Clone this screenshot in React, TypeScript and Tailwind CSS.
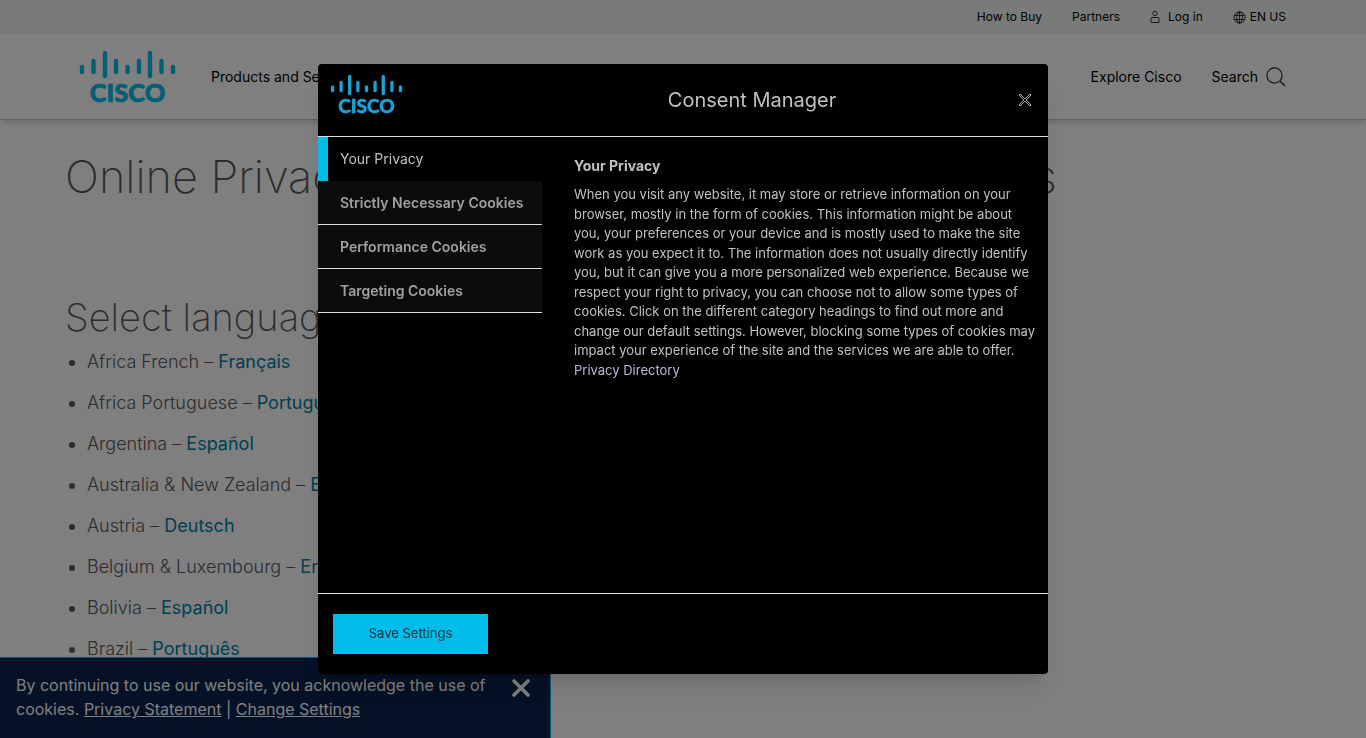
import { useState } from 'react';

interface LanguageEntry {
  region: string;
  language: string;
}

const languages: LanguageEntry[] = [
  { region: 'Africa French', language: 'Français' },
  { region: 'Africa Portuguese', language: 'Português' },
  { region: 'Argentina', language: 'Español' },
  { region: 'Australia & New Zealand', language: 'English' },
  { region: 'Austria', language: 'Deutsch' },
  { region: 'Belgium & Luxembourg', language: 'English' },
  { region: 'Bolivia', language: 'Español' },
  { region: 'Brazil', language: 'Português' },
];

const categories = [
  'Your Privacy',
  'Strictly Necessary Cookies',
  'Performance Cookies',
  'Targeting Cookies',
];

// x position, top and bottom of each bar in the bridge mark
const bars = [
  [2, 14, 22],
  [13.5, 8, 22],
  [25, 0, 26],
  [36, 8, 22],
  [47.5, 14, 22],
  [59, 8, 22],
  [70, 0, 26],
  [81.5, 8, 22],
  [93, 14, 22],
];

function CiscoLogo({ className }: { className: string }) {
  return (
    <svg viewBox="0 0 95 52" className={className} role="img" aria-label="Cisco">
      {bars.map(([x, top, bottom]) => (
        <line
          key={x}
          x1={x}
          x2={x}
          y1={top + 2}
          y2={bottom - 1}
          stroke="currentColor"
          strokeWidth="4.4"
          strokeLinecap="round"
        />
      ))}
      <text
        x="47.5"
        y="51"
        textAnchor="middle"
        fill="currentColor"
        stroke="currentColor"
        strokeWidth="0.7"
        fontFamily="Lato, sans-serif"
        fontWeight="900"
        fontSize="25.5"
      >
        CISCO
      </text>
    </svg>
  );
}

function UserIcon() {
  return (
    <svg
      viewBox="0 0 10 14"
      className="h-3.5 w-2.5"
      fill="none"
      stroke="currentColor"
      strokeWidth="0.8"
    >
      <circle cx="5" cy="3.4" r="2.2" />
      <path d="M1 12.5V8.5Q1 7.5 2 7.5H8Q9 7.5 9 8.5V12.5Z" />
    </svg>
  );
}

function GlobeIcon() {
  return (
    <svg
      viewBox="0 0 13 13"
      className="size-[13px]"
      fill="none"
      stroke="currentColor"
      strokeWidth="0.8"
    >
      <circle cx="6.5" cy="6.5" r="5.6" />
      <ellipse cx="6.5" cy="6.5" rx="2.8" ry="5.6" />
      <path d="M6.5 .9V12.1M1.4 4.5H11.6M1.4 8.5H11.6" />
    </svg>
  );
}

function SearchIcon() {
  return (
    <svg viewBox="0 0 20 20" className="size-5 text-[#333]" fill="none" stroke="currentColor">
      <circle cx="8.5" cy="8.5" r="7.6" strokeWidth="1.2" />
      <path d="M14 14L19 19" strokeWidth="1.6" />
    </svg>
  );
}

function SiteHeader() {
  return (
    <header className="border-b border-[#c4c4c4] text-black shadow-md">
      <div className="flex h-[34px] items-center justify-end gap-[30px] bg-[#f2f7f6] pr-20 text-xs">
        <a href="#buy">How to Buy</a>
        <a href="#partners">Partners</a>
        <a href="#login" className="flex items-center gap-2">
          <UserIcon />
          Log in
        </a>
        <a href="#locale" className="flex items-center gap-1">
          <GlobeIcon />
          EN US
        </a>
      </div>
      <div className="flex h-[85px] items-center px-20 text-sm">
        <a href="#home" className="mr-9 text-[#00bceb]">
          <CiscoLogo className="w-[95px] overflow-visible" />
        </a>
        <a href="#products">Products and Services</a>
        <a href="#explore" className="mr-[30px] ml-auto">
          Explore Cisco
        </a>
        <button className="flex items-center gap-2">
          Search
          <SearchIcon />
        </button>
      </div>
    </header>
  );
}

function CookieBanner() {
  return (
    <div className="fixed bottom-0 left-0 flex w-[551px] items-start justify-between border-t border-r border-[#00bceb] bg-[#08224c] pt-[15px] pr-5 pb-[17px] pl-4 text-base leading-6 text-white">
      <p className="w-[480px]">
        By continuing to use our website, you acknowledge the use of cookies.{' '}
        <a href="#statement" className="underline">
          Privacy Statement
        </a>{' '}
        |{' '}
        <a href="#settings" className="underline">
          Change Settings
        </a>
      </p>
      <button aria-label="Close banner" className="pt-1.5">
        <svg
          viewBox="0 0 18 18"
          className="size-[18px]"
          stroke="currentColor"
          strokeWidth="3.6"
          strokeLinecap="round"
        >
          <path d="M2 2L16 16M16 2L2 16" />
        </svg>
      </button>
    </div>
  );
}

function ConsentDialog() {
  const [active, setActive] = useState(categories[0]);

  return (
    <div className="fixed inset-0 flex items-center justify-center bg-black/50">
      <div
        role="dialog"
        aria-label="Consent Manager"
        className="flex h-[610px] w-[730px] flex-col rounded-sm bg-black text-[#c0c0c0] shadow-xl"
      >
        <div className="flex h-[73px] items-center border-b border-[#e0e0e0] pr-4 pl-[13px]">
          <CiscoLogo className="mb-3 w-[71px] overflow-visible text-[#1ba0d7]" />
          <h2 className="flex-1 pl-[84px] text-center text-xl">Consent Manager</h2>
          <button aria-label="Close">
            <svg
              viewBox="0 0 14 14"
              className="size-3.5"
              fill="none"
              stroke="currentColor"
              strokeWidth="0.9"
            >
              <path d="M1 2L2 1L7 5.8L12 1L13 2L8.2 7L13 12L12 13L7 8.2L2 13L1 12L5.8 7Z" />
            </svg>
          </button>
        </div>

        <div className="flex flex-1">
          <nav className="w-56 text-sm">
            {categories.map((name) => (
              <button
                key={name}
                onClick={() => setActive(name)}
                className={
                  name === active
                    ? 'flex h-11 w-full items-center border-l-10 border-[#00bceb] pl-3'
                    : 'flex h-11 w-full items-center border-b border-[#e0e0e0] bg-[#0c0c0c] pl-[22px] font-semibold text-[#a0a0a0]'
                }
              >
                {name}
              </button>
            ))}
          </nav>
          <div className="flex-1 pt-[19px] pr-3 pl-8">
            <h3 className="text-sm font-bold">Your Privacy</h3>
            <p className="mt-[9px] text-[13px] leading-normal">
              When you visit any website, it may store or retrieve information on your browser,
              mostly in the form of cookies. This information might be about you, your preferences
              or your device and is mostly used to make the site work as you expect it to. The
              information does not usually directly identify you, but it can give you a more
              personalized web experience. Because we respect your right to privacy, you can choose
              not to allow some types of cookies. Click on the different category headings to find
              out more and change our default settings. However, blocking some types of cookies may
              impact your experience of the site and the services we are able to offer.
              <br />
              <a href="#directory" className="text-[#b8b8dc]">
                Privacy Directory
              </a>
            </p>
          </div>
        </div>

        <div className="flex h-[81px] items-center border-t border-[#e0e0e0] px-[15px]">
          <button className="h-10 w-[155px] bg-[#00bceb] text-[13px] text-[#14303a]">
            Save Settings
          </button>
        </div>
      </div>
    </div>
  );
}

export default function App() {
  return (
    <div className="h-screen overflow-hidden bg-white font-['Inter',sans-serif]">
      <SiteHeader />
      <main className="px-[65px] text-[#58585b]">
        <h1 className="mt-7 text-[45px] leading-[58px] font-extralight">
          Online Privacy Statement Language Translations
        </h1>
        <h2 className="mt-[86px] text-[38px] leading-[50px] font-extralight">Select language</h2>
        <ul className="mt-1.5 list-disc pl-[22px] text-lg font-light">
          {languages.map(({ region, language }) => (
            <li key={region} className="mb-[13px] leading-7">
              {region} –{' '}
              <a href="#language" className="font-normal text-[#007fa3]">
                {language}
              </a>
            </li>
          ))}
        </ul>
      </main>
      <CookieBanner />
      <ConsentDialog />
    </div>
  );
}
